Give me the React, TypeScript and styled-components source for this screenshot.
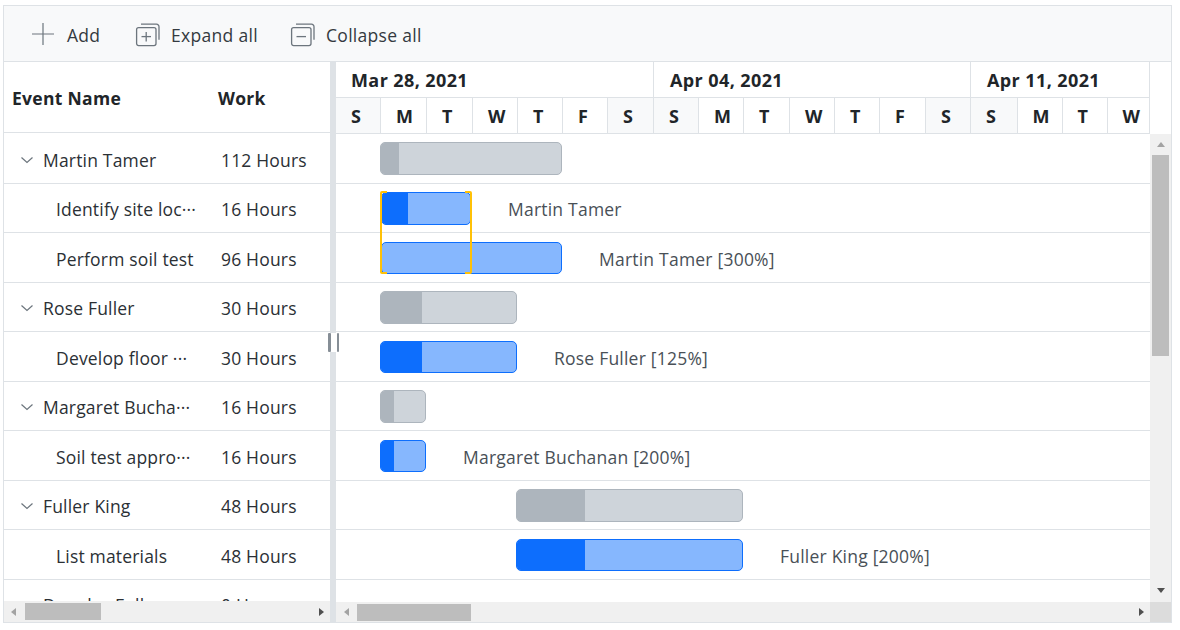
import React from "react";
import styled, { createGlobalStyle } from "styled-components";

const Global = createGlobalStyle`
  html, body { margin: 0; padding: 0; background: #fff; }
  body { font-family: "Open Sans", "Noto Sans", sans-serif; color: #212529; }
`;
const LINE = "#dee2e6";
const Page = styled.div`padding: 5px 0 0 3px; width: 1170px;`;
const Frame = styled.div`
  width: 1169px; height: 618px; border: 1px solid ${LINE}; box-sizing: border-box;
  display: flex; flex-direction: column; overflow: hidden;
`;
const Toolbar = styled.div`
  height: 55px; flex: none; background: #f8f9fa; border-bottom: 1px solid ${LINE}; box-sizing: content-box;
  display: flex; align-items: center; padding-left: 27px;
`;
const Tool = styled.div<{ $w: number }>`
  width: ${p => p.$w}px; flex: none; display: flex; align-items: center; gap: 10px;
  font-size: 17.5px; color: #343a40; letter-spacing: 0.3px;
`;
const ToolText = styled.span<{ $nudge?: number }>`padding: 3px 0 0 ${p => p.$nudge ?? 0}px;`;
const Body = styled.div`flex: 1; min-height: 0; display: flex;`;
const LeftPane = styled.div`width: 326px; flex: none; display: flex; flex-direction: column; overflow: hidden;`;
const Splitter = styled.div`
  width: 6px; flex: none; background: ${LINE}; position: relative;
`;
const Grip = styled.div`
  position: absolute; left: -2px; top: 271px; width: 11px; height: 19px; background: #fff;
  display: flex; justify-content: space-between; align-items: stretch;
  &::before, &::after { content: ""; width: 2.5px; background: #868e96; border-radius: 1px; }
`;
const GridHead = styled.div`
  height: 71px; flex: none; border-bottom: 1px solid ${LINE}; display: flex; align-items: center; padding-top: 2px;
  box-sizing: border-box;
  font-weight: 700; font-size: 17.5px; letter-spacing: 0.3px; color: #212529;
`;
const HeadName = styled.div`width: 214px; padding-left: 8px; box-sizing: border-box;`;
const HeadWork = styled.div`flex: 1;`;
const RowsClip = styled.div`flex: 1; min-height: 0; overflow: hidden; position: relative;`;
const Row = styled.div`
  height: 49.5px; box-sizing: border-box; border-bottom: 1px solid ${LINE};
  display: flex; align-items: center; padding-top: 3px;
  font-size: 17.5px; letter-spacing: 0.18px; color: #2b3035;
  &:first-child { height: 50.5px; padding-top: 5px; }
`;
const NameCell = styled.div<{ $child: boolean }>`
  width: 217px; flex: none; box-sizing: border-box; display: flex; align-items: center; white-space: nowrap;
  padding-left: ${p => (p.$child ? 52 : 17)}px;
`;
const Chevron = styled.svg`width: 12px; height: 12px; flex: none; margin-right: 10px;`;
const WorkCell = styled.div`flex: 1; white-space: nowrap;`;
const HScroll = styled.div<{ $h: number }>`
  height: ${p => p.$h}px; flex: none; background: #f0f0f0; display: flex; align-items: center; position: relative;
`;
const Thumb = styled.div<{ $w: number; $h: number; $ml: number }>`
  width: ${p => p.$w}px; height: ${p => p.$h}px; margin-left: ${p => p.$ml}px; background: #bdbdbd; flex: none;
`;
const ArrowL = styled.div<{ $c: string; $ml: number }>`
  width: 0; height: 0; flex: none; margin-left: ${p => p.$ml}px;
  border-style: solid; border-width: 4.5px 5px 4.5px 0; border-color: transparent ${p => p.$c} transparent transparent;
`;
const ArrowR = styled.div<{ $c: string }>`
  width: 0; height: 0; flex: none; margin-left: auto; margin-right: 6px;
  border-style: solid; border-width: 4.5px 0 4.5px 5px; border-color: transparent transparent transparent ${p => p.$c};
`;
const RightPane = styled.div`flex: 1; min-width: 0; display: flex; flex-direction: column;`;
const TimeHead = styled.div`
  height: 72px; flex: none; display: flex; box-sizing: border-box;
`;
const TimeLine = styled.div`
  width: 814px; flex: none; overflow: hidden; border-right: 1px solid ${LINE}; box-sizing: border-box;
  border-bottom: 1px solid ${LINE};
`;
const Weeks = styled.div`
  display: grid; grid-template-columns: 318px 317px 240px; height: 36px; width: 900px;
  box-sizing: border-box; border-bottom: 1px solid ${LINE};
`;
const Week = styled.div`
  box-sizing: border-box; border-right: 1px solid ${LINE};
  padding-left: 15px; font-size: 18px; font-weight: 700; line-height: 36px; letter-spacing: 0.4px; color: #212529;
  & + & { padding-left: 16px; }
`;
const Days = styled.div`
  display: grid; height: 35px; width: 900px;
  grid-template-columns: 45px 46px 46px 45px 45px 45px 46px 45px 45px 46px 45px 45px 46px 45px 46.6px 45px 45px 60px;
`;
const Day = styled.div<{ $off: boolean }>`
  box-sizing: border-box; border-right: 1px solid ${LINE}; padding-left: 15px;
  background: ${p => (p.$off ? "#f8f9fa" : "#fff")};
  font-size: 18px; font-weight: 700; line-height: 37px; color: #212529;
`;
const ChartBody = styled.div`flex: 1; min-height: 0; display: flex;`;
const Chart = styled.div`width: 814px; flex: none; position: relative; overflow: hidden;`;
const ChartRow = styled.div`height: 49.5px; box-sizing: border-box; border-bottom: 1px solid ${LINE};`;
const VScroll = styled.div`
  flex: 1; background: #f0f0f0; display: flex; flex-direction: column; align-items: center;
`;
const ArrowUp = styled.div`
  width: 0; height: 0; flex: none; margin-top: 8px; margin-bottom: 8px;
  border-style: solid; border-width: 0 4.5px 5px; border-color: transparent transparent #a3a3a3;
`;
const VThumb = styled.div`width: 17px; height: 201px; background: #bdbdbd; flex: none;`;
const ArrowDown = styled.div`
  width: 0; height: 0; flex: none; margin-top: auto; margin-bottom: 9px;
  border-style: solid; border-width: 5px 4.5px 0; border-color: #505050 transparent transparent;
`;
const Corner = styled.div`width: 21px; height: 100%; background: #dcdcdc; flex: none;`;
const Bar = styled.div<{ $x: number; $y: number; $w: number; $h: number; $tone: "grey" | "blue" }>`
  position: absolute; left: ${p => p.$x}px; top: ${p => p.$y}px; width: ${p => p.$w}px; height: ${p => p.$h}px;
  box-sizing: border-box; border-radius: 5px; overflow: hidden;
  background: ${p => (p.$tone === "grey" ? "#ced4da" : "#86b7fe")};
  border: 1px solid ${p => (p.$tone === "grey" ? "#adb5bd" : "#0d6efd")};
`;
const Progress = styled.div<{ $tone: "grey" | "blue" }>`
  height: 100%; background: ${p => (p.$tone === "grey" ? "#adb5bd" : "#0d6efd")};
`;
const BarLabel = styled.div<{ $x: number; $y: number }>`
  position: absolute; left: ${p => p.$x}px; top: ${p => p.$y}px; font-size: 17.5px; line-height: 24px;
  letter-spacing: 0.22px; color: #495057; white-space: nowrap;
`;
const Selection = styled.div`
  position: absolute; left: 44px; top: 57px; width: 92px; height: 83px; box-sizing: border-box;
  border-left: 2px solid #ffc107; border-right: 2px solid #ffc107; border-radius: 2px;
  &::before, &::after {
    content: ""; position: absolute; left: 0; right: 0; height: 2px;
    background: linear-gradient(90deg, #ffc107 5px, transparent 5px, transparent calc(100% - 5px), #ffc107 calc(100% - 5px));
  }
  &::before { top: 0; }
  &::after { bottom: 0; }
`;

const grid = [
  { name: "Martin Tamer", work: "112 Hours", child: false },
  { name: "Identify site loc···", work: "16 Hours", child: true },
  { name: "Perform soil test", work: "96 Hours", child: true },
  { name: "Rose Fuller", work: "30 Hours", child: false },
  { name: "Develop floor ···", work: "30 Hours", child: true },
  { name: "Margaret Bucha···", work: "16 Hours", child: false },
  { name: "Soil test appro···", work: "16 Hours", child: true },
  { name: "Fuller King", work: "48 Hours", child: false },
  { name: "List materials", work: "48 Hours", child: true },
  { name: "Douglas Fuller", work: "0 Hours", child: false },
];
const bars = [
  { x: 44, y: 8, w: 182, h: 33, p: 18, tone: "grey" as const },
  { x: 45, y: 58, w: 90, h: 33, p: 26, tone: "blue" as const },
  { x: 45, y: 108, w: 181, h: 32, p: 0, tone: "blue" as const },
  { x: 44, y: 157, w: 137, h: 33, p: 41, tone: "grey" as const },
  { x: 44, y: 207, w: 137, h: 32, p: 41, tone: "blue" as const },
  { x: 44, y: 256, w: 46, h: 33, p: 13, tone: "grey" as const },
  { x: 44, y: 306, w: 46, h: 32, p: 13, tone: "blue" as const },
  { x: 180, y: 355, w: 227, h: 33, p: 68, tone: "grey" as const },
  { x: 180, y: 405, w: 227, h: 32, p: 68, tone: "blue" as const },
];
const labels = [
  { x: 172, y: 63, t: "Martin Tamer" },
  { x: 263, y: 113, t: "Martin Tamer [300%]" },
  { x: 218, y: 212, t: "Rose Fuller [125%]" },
  { x: 127, y: 311, t: "Margaret Buchanan [200%]" },
  { x: 444, y: 410, t: "Fuller King [200%]" },
];
const letters = "SMTWTFSSMTWTFSSMTW".split("");
const off = (i: number) => i % 7 === 0 || i % 7 === 6;

const PlusIcon = () => (
  <svg width="25" height="24" viewBox="0 0 25 24" fill="none" stroke="#6c757d" strokeWidth="1.2">
    <path d="M12 1v22M1 12h22" />
  </svg>
);
const StackIcon = ({ plus }: { plus: boolean }) => (
  <svg width="26" height="26" viewBox="0 0 26 26" fill="none" stroke="#6c757d" strokeWidth="1.3">
    <rect x="1.6" y="6.6" width="19.4" height="18" rx="2" />
    <path d="M6 3.2h15.5a2.5 2.5 0 0 1 2.5 2.5v13" />
    <path d="M6.5 15.6h9.5" />
    {plus && <path d="M11.2 11v9.5" />}
  </svg>
);

export default function App() {
  return (
    <Page>
      <Global />
      <Frame>
        <Toolbar>
          <Tool $w={104}><PlusIcon /><ToolText $nudge={1}>Add</ToolText></Tool>
          <Tool $w={155}><StackIcon plus /><ToolText>Expand all</ToolText></Tool>
          <Tool $w={160}><StackIcon plus={false} /><ToolText>Collapse all</ToolText></Tool>
        </Toolbar>
        <Body>
          <LeftPane>
            <GridHead>
              <HeadName>Event Name</HeadName>
              <HeadWork>Work</HeadWork>
            </GridHead>
            <RowsClip>
              {grid.map(r => (
                <Row key={r.name}>
                  <NameCell $child={r.child}>
                    {!r.child && (
                      <Chevron viewBox="0 0 12 12" fill="none" stroke="#6c757d" strokeWidth="1.2">
                        <path d="M0.5 3.5L6 8.5L11.5 3.5" />
                      </Chevron>
                    )}
                    {r.name}
                  </NameCell>
                  <WorkCell>{r.work}</WorkCell>
                </Row>
              ))}
            </RowsClip>
            <HScroll $h={21}>
              <ArrowL $c="#a3a3a3" $ml={7} />
              <Thumb $w={76} $h={17} $ml={9} />
              <ArrowR $c="#505050" />
            </HScroll>
          </LeftPane>
          <Splitter><Grip /></Splitter>
          <RightPane>
            <TimeHead>
              <TimeLine>
                <Weeks>
                  <Week>Mar 28, 2021</Week>
                  <Week>Apr 04, 2021</Week>
                  <Week>Apr 11, 2021</Week>
                </Weeks>
                <Days>
                  {letters.map((l, i) => <Day key={i} $off={off(i)}>{l}</Day>)}
                </Days>
              </TimeLine>
            </TimeHead>
            <ChartBody>
              <Chart>
                {grid.map(r => <ChartRow key={r.name} />)}
                {bars.map((b, i) => (
                  <Bar key={i} $x={b.x} $y={b.y} $w={b.w} $h={b.h} $tone={b.tone}>
                    {b.p > 0 && <Progress $tone={b.tone} style={{ width: b.p }} />}
                  </Bar>
                ))}
                <Selection />
                {labels.map(l => <BarLabel key={l.t} $x={l.x} $y={l.y}>{l.t}</BarLabel>)}
              </Chart>
              <VScroll>
                <ArrowUp />
                <VThumb />
                <ArrowDown />
              </VScroll>
            </ChartBody>
            <HScroll $h={20}>
              <ArrowL $c="#a3a3a3" $ml={8} />
              <Thumb $w={114} $h={17} $ml={8} />
              <ArrowR $c="#505050" />
              <Corner />
            </HScroll>
          </RightPane>
        </Body>
      </Frame>
    </Page>
  );
}
